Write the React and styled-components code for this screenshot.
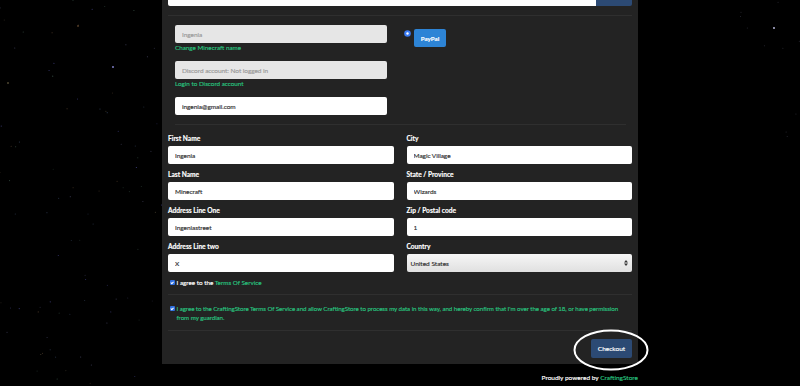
import React from "react";
import styled, { createGlobalStyle } from "styled-components";

const GlobalStyle = createGlobalStyle`
  html, body {
    margin: 0;
    padding: 0;
    background: #000;
  }
  body {
    font-family: Lato, "Open Sans", Arial, sans-serif;
  }
  * {
    box-sizing: border-box;
  }
`;

// deterministic star field
function makeStars() {
  let seed = 11;
  const rnd = () => {
    seed = (seed * 16807) % 2147483647;
    return seed / 2147483647;
  };
  const colors = ["#4a4a6a", "#6a5038", "#3a4a66", "#3f5a4f", "#6a5f48", "#5050a0"];
  const stars = [];
  for (let i = 0; i < 90; i++) {
    const x = Math.pow(rnd(), 1.2) * 165;
    const y = rnd() * 386;
    stars.push({ x, y, r: 0.55, c: colors[Math.floor(rnd() * colors.length)], o: 0.35 + rnd() * 0.5 });
  }
  for (let i = 0; i < 10; i++) {
    stars.push({ x: 740 + rnd() * 60, y: rnd() * 170, r: 0.5, c: "#4a4a5a", o: 0.6 });
  }
  stars.push({ x: 774, y: 28, r: 0.9, c: "#c8c8f0", o: 1 });
  stars.push({ x: 113, y: 67, r: 0.9, c: "#8a8ad8", o: 1 });
  stars.push({ x: 78, y: 26, r: 0.7, c: "#b08050", o: 0.9 });
  stars.push({ x: 8, y: 83, r: 0.7, c: "#b0a070", o: 0.9 });
  return stars;
}

const STARS = makeStars();

function StarField() {
  return (
    <Sky width="800" height="386" viewBox="0 0 800 386">
      {STARS.map((s, i) => (
        <circle key={i} cx={s.x} cy={s.y} r={s.r} fill={s.c} opacity={s.o} />
      ))}
    </Sky>
  );
}

function App() {
  return (
    <>
      <GlobalStyle />
      <Page>
        <StarField />
        <Panel>
          <TopRow>
            <Input defaultValue="" />
            <TopButton />
          </TopRow>
          <Divider />

          <AccountSection>
            <AccountFields>
              <Input disabled defaultValue="Ingenia" />
              <FieldLink>Change Minecraft name</FieldLink>
              <Input disabled defaultValue="Discord account: Not logged in" />
              <FieldLink>Login to Discord account</FieldLink>
              <Input defaultValue="ingenia@gmail.com" />
            </AccountFields>
            <PaymentOptions>
              <Radio width="7" height="7" viewBox="0 0 7 7">
                <circle cx="3.5" cy="3.5" r="3.3" fill="#3b7cf5" />
                <circle cx="3.5" cy="3.5" r="1.2" fill="#fff" />
              </Radio>
              <PayPalButton>PayPal</PayPalButton>
            </PaymentOptions>
          </AccountSection>
          <Divider $inset />

          <AddressGrid>
            <Field label="First Name" value="Ingenia" />
            <Field label="City" value="Magic Village" />
            <Field label="Last Name" value="Minecraft" />
            <Field label="State / Province" value="Wizards" />
            <Field label="Address Line One" value="Ingeniastreet" />
            <Field label="Zip / Postal code" value="1" />
            <Field label="Address Line two" value="X" />
            <FieldBox>
              <Label>Country</Label>
              <Select>
                <span>United States</span>
                <svg width="4" height="6" viewBox="0 0 4 6">
                  <path d="M0 2.4 L2 0 L4 2.4 Z M0 3.6 L2 6 L4 3.6 Z" fill="#333" />
                </svg>
              </Select>
            </FieldBox>
          </AddressGrid>

          <CheckRow>
            <Check />
            <span>
              I agree to the <Green>Terms Of Service</Green>
            </span>
          </CheckRow>
          <Divider $gap={7} />

          <ConsentRow>
            <Check />
            <Green>
              I agree to the CraftingStore Terms Of Service and allow CraftingStore to process my data in
              this way, and hereby confirm that I'm over the age of 18, or have permission from my
              guardian.
            </Green>
          </ConsentRow>
          <Divider $gap={8} />

          <Actions>
            <CheckoutWrap>
              <CheckoutButton>Checkout</CheckoutButton>
              <Circle viewBox="0 0 76 42" preserveAspectRatio="none">
                <ellipse cx="38" cy="21" rx="36.5" ry="19.5" fill="none" stroke="#fff" strokeWidth="2" />
              </Circle>
            </CheckoutWrap>
          </Actions>
        </Panel>
        <Footer>
          <span>
            Proudly powered by <Green>CraftingStore</Green>
          </span>
        </Footer>
      </Page>
    </>
  );
}

function Field({ label, value }) {
  return (
    <FieldBox>
      <Label>{label}</Label>
      <Input defaultValue={value} />
    </FieldBox>
  );
}

export default App;

const Page = styled.div`
  position: relative;
  width: 800px;
  height: 386px;
  overflow: hidden;
  background: #000;
`;

const Sky = styled.svg`
  position: absolute;
  left: 0;
  top: 0;
  pointer-events: none;
`;

const Panel = styled.div`
  position: relative;
  width: 476px;
  margin-left: 162px;
  height: 364px;
  background: #232323;
  padding: 0 6px;
  display: flex;
  flex-direction: column;
  -webkit-text-stroke: 0.15px currentColor;
`;

const TopRow = styled.div`
  display: flex;
  margin-top: -12px;
  height: 18px;

  & > input {
    flex: 1;
    border-radius: 2px 0 0 2px;
  }
`;

const TopButton = styled.div`
  width: 36px;
  height: 18px;
  background: #2c4a74;
  border-radius: 0 2px 2px 0;
`;

const Divider = styled.div`
  height: 1px;
  flex: none;
  background: #2f2f2f;
  margin: ${(p) => (p.$inset ? "9px 6px 0 7px" : `${p.$gap ?? 9}px 0 0`)};
`;

const Input = styled.input`
  display: block;
  width: 100%;
  height: 18px;
  border: none;
  outline: none;
  border-radius: 2px;
  padding: 0 7px;
  font-family: Lato, "Open Sans", Arial, sans-serif;
  font-size: 6.5px;
  letter-spacing: -0.05px;
  -webkit-text-stroke: 0.15px currentColor;
  color: #333;
  background: #fff;

  &:disabled {
    background: #e6e6e6;
    color: #9a9a9a;
  }
`;

const AccountSection = styled.div`
  display: grid;
  grid-template-columns: 212px 1fr;
  column-gap: 17px;
  padding: 9px 7px 0;
`;

const AccountFields = styled.div`
  display: flex;
  flex-direction: column;
`;

const FieldLink = styled.div`
  font-size: 6.3px;
  line-height: 9px;
  height: 9px;
  margin-bottom: 9px;
  color: #29c27f;
`;

const PaymentOptions = styled.div`
  display: flex;
  align-items: flex-start;
  gap: 3px;
  padding-top: 4px;
`;

const Radio = styled.svg`
  flex: none;
  margin-top: 1px;
`;

const PayPalButton = styled.div`
  width: 32px;
  height: 18px;
  border-radius: 2px;
  background: #2d84d6;
  color: #fff;
  font-size: 6.2px;
  font-weight: 700;
  display: flex;
  align-items: center;
  justify-content: center;
`;

const AddressGrid = styled.div`
  display: grid;
  grid-template-columns: 1fr 1fr;
  column-gap: 13px;
  row-gap: 6px;
  padding-top: 9px;
`;

const FieldBox = styled.div`
  display: flex;
  flex-direction: column;
`;

const Label = styled.div`
  font-size: 6.6px;
  font-weight: 700;
  line-height: 9px;
  height: 9px;
  margin-bottom: 3px;
  color: #fff;
`;

const Select = styled.div`
  height: 18px;
  border-radius: 2px;
  padding: 0 4px;
  display: flex;
  align-items: center;
  justify-content: space-between;
  background: linear-gradient(#f6f6f6, #e0e0e0);
  color: #333;
  font-size: 6.5px;
`;

const CheckRow = styled.div`
  display: flex;
  align-items: center;
  gap: 2px;
  margin-top: 6px;
  height: 9px;
  padding-left: 2px;
  font-size: 6.3px;
  color: #fff;
`;

const Check = styled.span`
  flex: none;
  width: 4.5px;
  height: 4.5px;
  border-radius: 1px;
  background: #2f6fe0;
  position: relative;

  &::after {
    content: "";
    position: absolute;
    left: 1.3px;
    top: 0.3px;
    width: 1.2px;
    height: 2.4px;
    border: solid #fff;
    border-width: 0 0.7px 0.7px 0;
    transform: rotate(45deg);
  }
`;

const ConsentRow = styled.div`
  display: flex;
  align-items: flex-start;
  gap: 2px;
  margin-top: 9px;
  padding-left: 2px;
  font-size: 6.2px;
  letter-spacing: -0.06px;
  line-height: 9px;

  & > span:first-child {
    margin-top: 2.3px;
  }
`;

const Green = styled.span`
  color: #29c27f;
`;

const Actions = styled.div`
  display: flex;
  justify-content: flex-end;
  padding-top: 8px;
`;

const CheckoutWrap = styled.div`
  position: relative;
`;

const CheckoutButton = styled.div`
  width: 41px;
  height: 19px;
  border-radius: 2px;
  background: #2c4a74;
  color: #fff;
  font-size: 6.5px;
  display: flex;
  align-items: center;
  justify-content: center;
`;

const Circle = styled.svg`
  position: absolute;
  left: -18px;
  top: -10px;
  width: 76px;
  height: 42px;
  overflow: visible;
  pointer-events: none;
`;

const Footer = styled.div`
  width: 476px;
  margin-left: 162px;
  margin-top: 9px;
  display: flex;
  justify-content: flex-end;
  font-size: 6.5px;
  line-height: 9px;
  color: #fff;
  position: relative;
  -webkit-text-stroke: 0.15px currentColor;
`;
